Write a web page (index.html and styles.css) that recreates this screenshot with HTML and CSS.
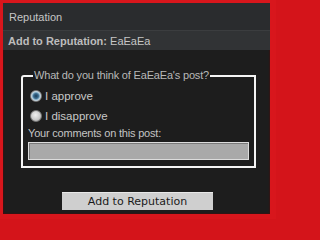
FILE: index.html
```html
<!DOCTYPE html>
<html>
<head>
<meta charset="utf-8">
<link rel="stylesheet" href="styles.css">
</head>
<body>
<div class="frame">
  <div class="head1">Reputation</div>
  <div class="head2"><b>Add to Reputation:</b>&nbsp;EaEaEa</div>
  <div class="content">
    <fieldset class="box">
      <legend class="legend">What do you think of EaEaEa's post?</legend>
      <label class="opt"><input type="radio" name="r" class="radio" checked> I approve</label>
      <label class="opt"><input type="radio" name="r" class="radio"> I disapprove</label>
      <div class="caption">Your comments on this post:</div>
      <input type="text" class="comment">
    </fieldset>
    <div class="actions"><button class="btn">Add to Reputation</button></div>
  </div>
</div>
</body>
</html>
```
FILE: styles.css
```css
html, body { margin: 0; padding: 0; background: #d4141a; }
.frame {
  width: 276px; height: 219px; box-sizing: border-box;
  border-style: solid; border-color: #d8161c;
  border-width: 3px 6px 5px 3px;
  background: #1d1d1d;
  display: flex; flex-direction: column;
  font-family: "Liberation Sans", Arial, sans-serif;
  font-size: 11px; color: #c4c4c4;
  box-shadow: inset 0 0 2px #600;
}
.head1 {
  height: 26px; background: #2a2c2e; border-bottom: 1px solid #3b3d3f;
  padding-left: 6px; display: flex; align-items: center;
  color: #c6c6c6; padding-top: 1px;
}
.head2 {
  height: 19px; background: #313335; padding-left: 5px;
  display: flex; align-items: center; color: #c6c6c6;
}
.head2 b { color: #bdbdbd; }
.content { padding: 19px 14px 0 18px; }
.box {
  margin: 0; border: 2px solid #f4f4f4; border-radius: 3px 0 0 0;
  padding: 4px 4px 6px 5px; display: flex; flex-direction: column;
}
.legend { padding: 0 1px; margin-left: 5px; color: #b8b8b8; font-size: 11px; line-height: 13px; letter-spacing: -0.18px; }
.opt { display: flex; align-items: center; height: 20px; color: #c8c8c8; font-size: 11.5px; }
.radio {
  appearance: none; -webkit-appearance: none; margin: 0 3px 0 2px;
  width: 12px; height: 12px; border-radius: 50%;
  background: radial-gradient(circle at 45% 40%, #f0f0f0 0, #c8c8c8 60%, #8a8a8a 100%);
  border: 1px solid #777; box-sizing: border-box;
}
.radio:checked {
  background: radial-gradient(circle at 50% 50%, #1b3a55 0, #3a6d90 35%, #9fc0d4 55%, #e8eef2 75%, #9a9a9a 100%);
}
.caption { margin-top: 0; color: #c4c4c4; font-size: 11px; line-height: 14px; letter-spacing: -0.2px; }
.comment {
  margin: 2px 1px 0 0; height: 18px; box-sizing: border-box;
  background: #a9a9a9; border: 1px solid #dcdcdc;
  box-shadow: inset 1px 1px 0 #7a7a7a; padding: 0;
}
.actions { display: flex; padding-left: 41px; margin-top: 24px; }
.btn {
  width: 151px; height: 18px; padding: 0; margin: 0;
  background: #cfcfcf; border: 0; border-top: 1px solid #e8e8e8;
  font-family: "DejaVu Sans", Verdana, sans-serif; font-size: 11px; color: #1a1a1a;
  line-height: 16px;
}
```
